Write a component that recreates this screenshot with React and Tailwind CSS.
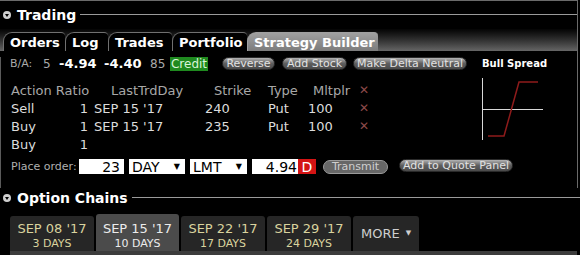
const Pill = ({ w, ml, children, className = '' }) => (
  <div
    className={`flex h-[13px] items-center justify-center rounded-full border border-[#2a2a2a] bg-gradient-to-b from-[#b4b4b4] via-[#5e5e5e] to-[#4a4a4a] text-[11px] leading-none text-[#e2e2e2] ${className}`}
    style={{ width: w, marginLeft: ml }}
  >
    {children}
  </div>
);

const SectionHeader = ({ title, className = '' }) => (
  <div className={`flex items-center pl-[3px] ${className}`}>
    <div className="flex h-[8px] w-[8px] items-center justify-center rounded-full bg-[#cfcfcf]">
      <div className="mt-[1px] h-0 w-0 border-x-[2.5px] border-t-[3px] border-x-transparent border-t-black" />
    </div>
    <div className="ml-[6px] text-[14px] font-bold leading-none text-white">{title}</div>
    <div className="mb-[2px] ml-[4px] h-px flex-1 bg-[#9a9a9a]" />
  </div>
);

const tabs = [
  { label: 'Orders', w: 62 },
  { label: 'Log', w: 43 },
  { label: 'Trades', w: 64 },
  { label: 'Portfolio', w: 75 },
  { label: 'Strategy Builder', w: 131, active: true },
];

const legs = [
  { action: 'Sell', ratio: '1', day: "SEP 15 '17", strike: '240', type: 'Put', mult: '100' },
  { action: 'Buy', ratio: '1', day: "SEP 15 '17", strike: '235', type: 'Put', mult: '100' },
  { action: 'Buy', ratio: '1' },
];

const expiries = [
  { date: "SEP 08 '17", days: '3 DAYS', w: 84 },
  { date: "SEP 15 '17", days: '10 DAYS', w: 83, active: true },
  { date: "SEP 22 '17", days: '17 DAYS', w: 84 },
  { date: "SEP 29 '17", days: '24 DAYS', w: 84 },
];

const Row = ({ cells, className = '' }) => (
  <div className={`grid h-[18px] grid-cols-[40px_37px_113px_67px_38px_50px_20px] items-center whitespace-nowrap pl-[10px] ${className}`}>
    {cells}
  </div>
);

const Cross = () => <span className="pl-[3px] text-[12px] font-bold text-[#8e4a4a]">✕</span>;

const Select = ({ w, ml, label }) => (
  <div className="flex h-[15px] items-center justify-between bg-white pl-[3px] pr-[5px] text-[14px] leading-none text-black" style={{ width: w, marginLeft: ml }}>
    <span>{label}</span>
    <span className="text-[8px]">▼</span>
  </div>
);

export default function App() {
  return (
    <div className="h-[255px] w-[580px] overflow-hidden bg-black font-['DejaVu_Sans',sans-serif] text-[#dcdcdc]">
      <div className="w-[578px] border-r border-t border-[#6a6a6a]">
        <SectionHeader title="Trading" className="h-[28px]" />

        {/* tab strip */}
        <div className="flex h-[22px] items-end bg-gradient-to-b from-[#050505] to-[#666666] pl-[3px]">
          {tabs.map((t) => (
            <div
              key={t.label}
              className={`flex h-[19px] items-center rounded-tl-[9px] rounded-tr-[4px] border-l border-t pl-[6px] text-[13px] font-bold leading-none text-white ${
                t.active ? 'border-[#a0a0a0] bg-gradient-to-b from-[#a0a0a0] to-[#7c7c7c]' : 'border-[#707070] bg-black'
              }`}
              style={{ width: t.w }}
            >
              {t.label}
            </div>
          ))}
        </div>

        <div className="h-[131px] border-l border-[#5a5a5a]">
          {/* bid / ask row */}
          <div className="mt-[6px] flex h-[13px] items-center pl-[9px] leading-none">
            <span className="w-[33px] text-[11px] text-[#aaa]">B/A:</span>
            <span className="w-[16px] text-[12px] text-[#aaa]">5</span>
            <span className="w-[45px] text-[13px] font-bold text-white">-4.94</span>
            <span className="w-[46px] text-[13px] font-bold text-white">-4.40</span>
            <span className="w-[20px] text-[12px] text-[#aaa]">85</span>
            <span className="flex h-[14px] w-[38px] items-center justify-center bg-[#1f8a1f] text-[12px] text-[#d9f5d9]">Credit</span>
            <Pill w={53} ml={14}>Reverse</Pill>
            <Pill w={65} ml={7}>Add Stock</Pill>
            <Pill w={114} ml={6}>Make Delta Neutral</Pill>
            <span className="ml-[15px] whitespace-nowrap text-[10px] font-bold text-white">Bull Spread</span>
          </div>

          {/* legs + payoff */}
          <div className="mt-[6px] flex">
            <div className="w-[470px] pt-[5px] text-[13px] leading-none">
              <Row
                className="text-[#a8a8a8]"
                cells={
                  <>
                    <span className="col-span-2">Action Ratio</span>
                    <span className="pl-[23px]">LastTrdDay</span>
                    <span className="pl-[13px]">Strike</span>
                    <span>Type</span>
                    <span className="pl-[7px]">Mltplr</span>
                    <Cross />
                  </>
                }
              />
              {legs.map((l, i) => (
                <Row
                  key={i}
                  cells={
                    <>
                      <span>{l.action}</span>
                      <span className="text-right">{l.ratio}</span>
                      <span className="pl-[6px]">{l.day}</span>
                      <span className="pl-[4px]">{l.strike}</span>
                      <span>{l.type}</span>
                      <span className="pl-[2px]">{l.mult}</span>
                      {l.day ? <Cross /> : <span />}
                    </>
                  }
                />
              ))}
            </div>
            <svg width="70" height="66" viewBox="0 0 70 66" className="ml-[8px]">
              <line x1="3.5" y1="2" x2="3.5" y2="64" stroke="#d8d8d8" strokeWidth="1" />
              <line x1="3" y1="33.5" x2="64" y2="33.5" stroke="#d8d8d8" strokeWidth="1" />
              <polyline points="9,60 25,60 40,6 59,6" fill="none" stroke="#8e1b1b" strokeWidth="1.5" />
            </svg>
          </div>

          {/* place order */}
          <div className="mt-[6px] flex h-[15px] items-center pl-[10px] leading-none">
            <span className="w-[68px] text-[11px] text-[#b0b0b0]">Place order:</span>
            <div className="flex h-[15px] w-[45px] items-center justify-end bg-white pr-[4px] text-[14px] text-black">23</div>
            <Select w={56} ml={5} label="DAY" />
            <Select w={57} ml={5} label="LMT" />
            <div className="ml-[5px] flex h-[15px] w-[46px] items-center justify-end bg-white pr-[1px] text-[14px] text-black">4.94</div>
            <div className="flex h-[15px] w-[18px] items-center justify-center bg-[#d41414] text-[14px] text-white">D</div>
            <div className="ml-[7px] flex h-[14px] w-[65px] items-center justify-center rounded-full border border-[#9a9a9a] bg-[#676767] text-[11px] text-[#cfcfcf]">
              Transmit
            </div>
            <Pill w={114} ml={11} className="-mt-[2px]">
              Add to Quote Panel
            </Pill>
          </div>
        </div>
      </div>

      <SectionHeader title="Option Chains" className="h-[20px]" />

      {/* expiry tabs */}
      <div className="mt-[6px] flex h-[37px] items-end gap-[2px] pl-[10px]">
        {expiries.map((e) => (
          <div
            key={e.date}
            className={`flex flex-col items-center rounded-t-[3px] leading-none ${
              e.active ? 'h-[37px] bg-[#4b4b4b] pt-[8px] text-[#ececec]' : 'h-[35px] bg-[#262626] pt-[6px] text-[#d9d39e]'
            }`}
            style={{ width: e.w }}
          >
            <span className="text-[13px]">{e.date}</span>
            <span className="mt-[3px] text-[11px]">{e.days}</span>
          </div>
        ))}
        <div className="flex h-[35px] w-[66px] items-center gap-[6px] rounded-t-[3px] bg-[#262626] pl-[8px] text-[13px] leading-none text-[#cfcfcf]">
          MORE <span className="text-[7px]">▼</span>
        </div>
      </div>
      <div className="ml-[10px] h-[5px] w-[567px] bg-[#3c3c3c]" />
    </div>
  );
}
